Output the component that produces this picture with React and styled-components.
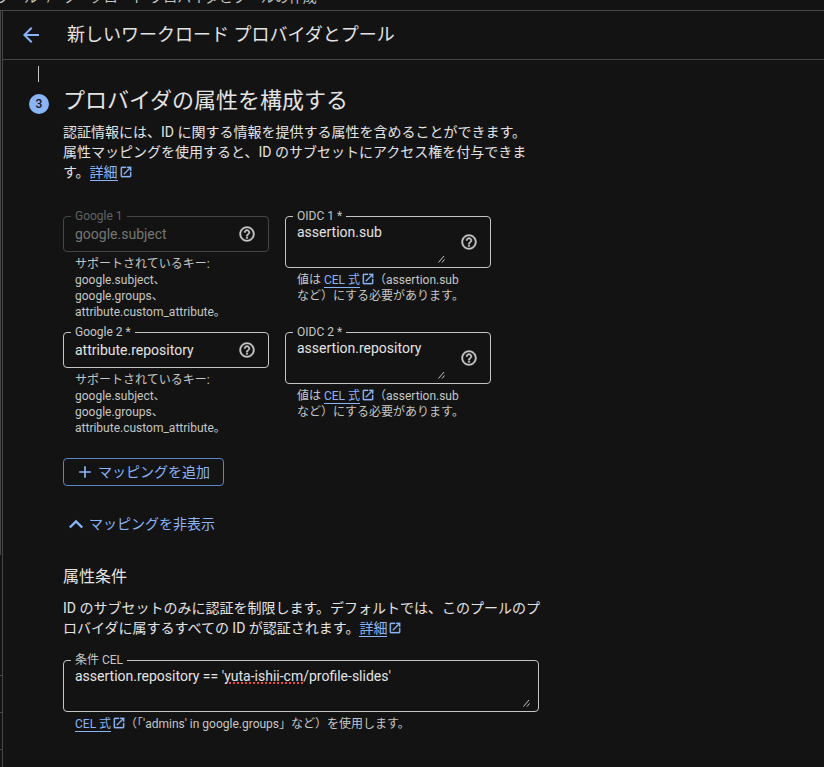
import { useState } from 'react'
import styled, { createGlobalStyle } from 'styled-components'
import { MdAdd, MdArrowBack, MdHelpOutline, MdOpenInNew } from 'react-icons/md'

const keyHint = 'サポートされているキー:\ngoogle.subject、\ngoogle.groups、\nattribute.custom_attribute。'

const mappings = [
    { id: 1, google: 'google.subject', oidc: 'assertion.sub', locked: true },
    { id: 2, google: 'attribute.repository', oidc: 'assertion.repository', locked: false },
]

const DocLink = ({ children }) => {
    return <Link href='#docs'>
        <span>{children}</span>
        <MdOpenInNew />
    </Link>
}

const Grip = () => {
    return <GripIcon viewBox='0 0 8 8' aria-hidden='true'>
        <path d='M1.5 7.5L7 1M5 7.5L7.5 4.5' />
    </GripIcon>
}

const GoogleField = ({ id, value, locked }) => {
    return <Field>
        <Outline $locked={locked}>
            <Label htmlFor={`google-${id}`} $locked={locked}>Google {id}{locked ? '' : ' *'}</Label>
            <Input id={`google-${id}`} defaultValue={value} disabled={locked} />
            <Help type='button' aria-label='ヘルプ'><MdHelpOutline /></Help>
        </Outline>
        <Hint>{keyHint}</Hint>
    </Field>
}

const OidcField = ({ id, value }) => {
    return <Field>
        <Outline>
            <Label htmlFor={`oidc-${id}`}>OIDC {id} *</Label>
            <AreaBox>
                <Area id={`oidc-${id}`} defaultValue={value} spellCheck={false} />
                <Grip />
            </AreaBox>
            <Help type='button' aria-label='ヘルプ'><MdHelpOutline /></Help>
        </Outline>
        <Hint>値は <DocLink>CEL 式</DocLink>（assertion.sub{'\n'}など）にする必要があります。</Hint>
    </Field>
}

const App = () => {
    const [open, setOpen] = useState(true)

    return <Page>
        <GlobalStyle />
        <Crumbs>
            <span>プール</span>
            <span>/</span>
            <span>ワークロード プロバイダとプールの作成</span>
        </Crumbs>
        <Body>
            <Rail>
                <RailPanel />
                <RailRow />
                <RailRow />
                <RailRow />
            </Rail>
            <Panel>
                <Header>
                    <Back type='button' aria-label='戻る'><MdArrowBack /></Back>
                    <Title>新しいワークロード プロバイダとプール</Title>
                </Header>
                <Step>
                    <Marker>
                        <Line />
                        <Badge>3</Badge>
                    </Marker>
                    <Content>
                        <StepTitle>プロバイダの属性を構成する</StepTitle>
                        <Text>
                            認証情報には、ID に関する情報を提供する属性を含めることができます。<br />
                            属性マッピングを使用すると、ID のサブセットにアクセス権を付与できま<br />
                            す。<DocLink>詳細</DocLink>
                        </Text>
                        <Mappings>
                            {open && mappings.map(m => <MappingRow key={m.id}>
                                <GoogleField id={m.id} value={m.google} locked={m.locked} />
                                <OidcField id={m.id} value={m.oidc} />
                            </MappingRow>)}
                        </Mappings>
                        <AddButton type='button'><MdAdd />マッピングを追加</AddButton>
                        <Toggle type='button' onClick={() => setOpen(!open)}>
                            <Chevron viewBox='0 0 16 16' $open={open} aria-hidden='true'>
                                <path d='M1.8 11.5L8 5.5L14.2 11.5' />
                            </Chevron>
                            {open ? 'マッピングを非表示' : 'マッピングを表示'}
                        </Toggle>
                        <SubTitle>属性条件</SubTitle>
                        <Text>
                            ID のサブセットのみに認証を制限します。デフォルトでは、このプールのプ<br />
                            ロバイダに属するすべての ID が認証されます。<DocLink>詳細</DocLink>
                        </Text>
                        <Condition>
                            <Outline $wide>
                                <Label htmlFor='cel'>条件 CEL</Label>
                                <AreaBox>
                                    <Area
                                        id='cel'
                                        $marked
                                        spellCheck={false}
                                        defaultValue={"assertion.repository == 'yuta-ishii-cm/profile-slides'"}
                                    />
                                    <Grip />
                                </AreaBox>
                            </Outline>
                            <Hint><DocLink>CEL 式</DocLink>（「'admins' in google.groups」など）を使用します。</Hint>
                        </Condition>
                    </Content>
                </Step>
            </Panel>
        </Body>
    </Page>
}

const GlobalStyle = createGlobalStyle`
* {
    box-sizing: border-box;
}
body {
    margin: 0;
    background: #131313;
    color: #e3e3e3;
    font-family: Roboto, "Noto Sans CJK JP", sans-serif;
    font-size: 14px;
    line-height: 20px;
}
button, input, textarea {
    font: inherit;
    color: inherit;
    background: none;
    border: none;
    padding: 0;
    margin: 0;
    outline: none;
}
button {
    cursor: pointer;
}
svg path[fill='none'] {
    stroke: none;
}
`

const Page = styled.div`
display: flex;
flex-direction: column;
min-height: 100vh;
`

const Crumbs = styled.nav`
display: flex;
align-items: flex-end;
gap: 9px;
height: 11px;
margin-left: -4px;
padding-bottom: 3px;
overflow: hidden;
border-bottom: 1px solid #444746;
color: #c4c7c5;
white-space: nowrap;
`

const Body = styled.div`
display: flex;
flex: 1;
`

const Rail = styled.div`
display: flex;
flex-direction: column;
width: 3px;
border-right: 1px solid #444746;
`

const RailPanel = styled.div`
width: 1px;
height: 544px;
margin-bottom: 84px;
background: #444746;
`

const RailRow = styled.div`
height: 37px;
border-bottom: 1px solid #444746;
`

const Panel = styled.main`
flex: 1;
min-width: 0;
`

const Header = styled.header`
display: flex;
align-items: center;
gap: 24px;
height: 49px;
padding-left: 16px;
border-bottom: 1px solid #444746;
`

const Back = styled.button`
display: flex;
font-size: 24px;
color: #8ab4f8;
`

const Title = styled.h1`
margin: 0;
font-size: 18px;
font-weight: 400;
line-height: 24px;
`

const Step = styled.section`
display: flex;
gap: 14px;
padding: 6px 24px 24px 26px;
`

const Marker = styled.div`
display: flex;
flex-direction: column;
align-items: center;
gap: 12px;
width: 20px;
`

const Line = styled.div`
width: 1px;
height: 16px;
margin-right: 1px;
background: #c4c7c5;
`

const Badge = styled.span`
width: 20px;
height: 20px;
border-radius: 50%;
background: #8ab4f8;
color: #131313;
font-size: 12px;
font-weight: 500;
text-align: center;
`

const Content = styled.div`
flex: 1;
min-width: 0;
max-width: 484px;
padding-top: 21px;
`

const StepTitle = styled.h2`
margin: 0 0 7px;
font-size: 22px;
font-weight: 400;
line-height: 28px;
`

const SubTitle = styled.h3`
margin: 0 0 9px;
font-size: 16px;
font-weight: 400;
line-height: 24px;
`

const Text = styled.p`
margin: 0;
`

const Link = styled.a`
color: #8ab4f8;
text-decoration: none;
white-space: nowrap;

span {
    border-bottom: 1px solid #8ab4f8;
}

svg {
    width: 14px;
    height: 14px;
    margin: 0 -1px 0 1px;
    stroke: currentColor;
    stroke-width: 0.5px;
    vertical-align: -2px;
}
`

const Mappings = styled.div`
display: flex;
flex-direction: column;
gap: 12px;
margin: 34px 0 22px;
`

const MappingRow = styled.div`
display: flex;
gap: 16px;
`

const Field = styled.div`
width: 206px;
`

const Condition = styled.div`
max-width: 476px;
margin-top: 22px;
`

const Outline = styled.div`
display: flex;
align-items: center;
position: relative;
padding-left: 11px;
padding-right: ${p => p.$wide ? '5px' : '12px'};
border: 1px solid ${p => p.$locked ? '#444746' : '#c4c7c5'};
border-radius: 4px;
`

const Label = styled.label`
position: absolute;
top: -9px;
left: 7px;
padding: 0 4px;
background: #131313;
color: ${p => p.$locked ? '#5f6368' : '#c4c7c5'};
font-size: 12px;
line-height: 16px;
`

const Input = styled.input`
flex: 1;
min-width: 0;
height: 34px;

&:disabled {
    color: #757775;
}
`

const AreaBox = styled.div`
display: flex;
flex: 1;
position: relative;
min-width: 0;
`

const Area = styled.textarea`
width: 100%;
height: 50px;
padding-top: 5px;
resize: none;
overflow: hidden;
${p => p.$marked && `
background: repeating-linear-gradient(90deg, #f0483c 0 2px, transparent 2px 4px) 150px 21px / 79px 2px no-repeat;
`}
`

const GripIcon = styled.svg`
position: absolute;
right: 3px;
bottom: 4px;
width: 8px;
height: 8px;
stroke: #c4c7c5;
`

const Help = styled.button`
display: flex;
margin-left: 12px;
color: #c4c7c5;
font-size: 18px;

svg {
    stroke: currentColor;
    stroke-width: 0.5px;
}
`

const Hint = styled.div`
margin-top: 4px;
padding: 0 12px;
color: #c4c7c5;
font-size: 12px;
line-height: 16px;
white-space: pre-line;
`

const AddButton = styled.button`
display: flex;
align-items: center;
gap: 3px;
height: 28px;
padding: 0 13px 0 11px;
border: 1px solid #5a86c8;
border-radius: 4px;
color: #8ab4f8;

svg {
    font-size: 20px;
}
`

const Toggle = styled.button`
display: flex;
align-items: center;
gap: 5px;
margin: 28px 0 31px;
padding-left: 5px;
color: #8ab4f8;
`

const Chevron = styled.svg`
width: 16px;
height: 16px;
fill: none;
stroke: #8ab4f8;
stroke-width: 2.4;
transform: ${p => p.$open ? 'none' : 'rotate(180deg)'};
`

export default App
